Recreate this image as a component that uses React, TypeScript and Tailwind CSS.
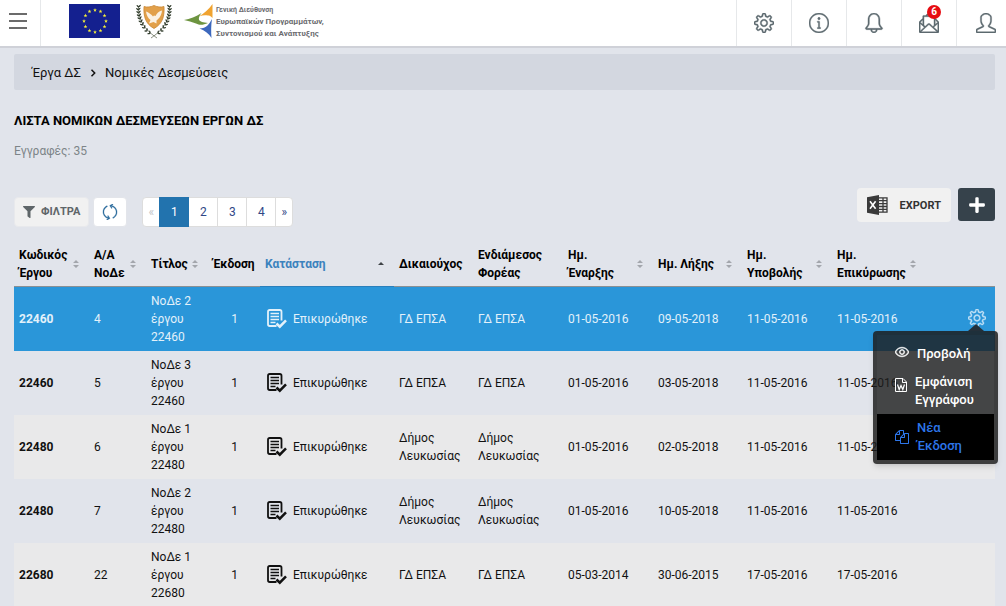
import React from "react";
import { SlBell, SlEnvolopeLetter, SlEye, SlInfo, SlRefresh, SlSettings, SlUser } from "react-icons/sl";
import { FaFilter, FaPlus } from "react-icons/fa";

type Row = {
  code: string;
  serial: string;
  title: string[];
  version: string;
  status: string;
  beneficiary: string;
  body: string;
  start: string;
  end: string;
  submitted: string;
  approved: string;
};

const rows: Row[] = [
  { code: "22460", serial: "4", title: ["ΝοΔε 2", "έργου", "22460"], version: "1", status: "Επικυρώθηκε", beneficiary: "ΓΔ ΕΠΣΑ", body: "ΓΔ ΕΠΣΑ", start: "01-05-2016", end: "09-05-2018", submitted: "11-05-2016", approved: "11-05-2016" },
  { code: "22460", serial: "5", title: ["ΝοΔε 3", "έργου", "22460"], version: "1", status: "Επικυρώθηκε", beneficiary: "ΓΔ ΕΠΣΑ", body: "ΓΔ ΕΠΣΑ", start: "01-05-2016", end: "03-05-2018", submitted: "11-05-2016", approved: "11-05-2016" },
  { code: "22480", serial: "6", title: ["ΝοΔε 1", "έργου", "22480"], version: "1", status: "Επικυρώθηκε", beneficiary: "Δήμος Λευκωσίας", body: "Δήμος Λευκωσίας", start: "01-05-2016", end: "02-05-2018", submitted: "11-05-2016", approved: "11-05-2016" },
  { code: "22480", serial: "7", title: ["ΝοΔε 2", "έργου", "22480"], version: "1", status: "Επικυρώθηκε", beneficiary: "Δήμος Λευκωσίας", body: "Δήμος Λευκωσίας", start: "01-05-2016", end: "10-05-2018", submitted: "11-05-2016", approved: "11-05-2016" },
  { code: "22680", serial: "22", title: ["ΝοΔε 1", "έργου", "22680"], version: "1", status: "Επικυρώθηκε", beneficiary: "ΓΔ ΕΠΣΑ", body: "ΓΔ ΕΠΣΑ", start: "05-03-2014", end: "30-06-2015", submitted: "17-05-2016", approved: "17-05-2016" },
];

type Column = { lines: string[]; sort: "none" | "both" | "asc"; width: string };

const columns: Column[] = [
  { lines: ["Κωδικός", "Έργου"], sort: "both", width: "w-[75px]" },
  { lines: ["Α/Α", "ΝοΔε"], sort: "both", width: "w-[57px]" },
  { lines: ["Τίτλος"], sort: "both", width: "w-[62px]" },
  { lines: ["Έκδοση"], sort: "none", width: "w-[52px]" },
  { lines: ["Κατάσταση"], sort: "asc", width: "w-[134px]" },
  { lines: ["Δικαιούχος"], sort: "none", width: "w-[79px]" },
  { lines: ["Ενδιάμεσος", "Φορέας"], sort: "none", width: "w-[90px]" },
  { lines: ["Ημ.", "Έναρξης"], sort: "both", width: "w-[90px]" },
  { lines: ["Ημ. Λήξης"], sort: "both", width: "w-[89px]" },
  { lines: ["Ημ.", "Υποβολής"], sort: "both", width: "w-[90px]" },
  { lines: ["Ημ.", "Επικύρωσης"], sort: "both", width: "w-[94px]" },
];

function EuFlag() {
  const stars = Array.from({ length: 12 }, (_, i) => {
    const a = (i * Math.PI) / 6;
    return { x: 26 + 11 * Math.sin(a), y: 17 - 11 * Math.cos(a) };
  });
  return (
    <svg className="h-[34px] w-[51px]" viewBox="0 0 51 34" aria-hidden="true">
      <rect width="51" height="34" fill="#14208f" />
      {stars.map((s, i) => (
        <path
          key={i}
          transform={`translate(${s.x} ${s.y})`}
          d="M0-2 .5-.6 1.9-.6 .8.3 1.2 1.7 0 .9-1.2 1.7-.8.3-1.9-.6-.5-.6Z"
          fill="#f4ee3a"
        />
      ))}
    </svg>
  );
}

function Laurel() {
  const leaves = [
    [1.6, 4, 0], [1.2, 7, 0], [1.5, 10, -4], [2, 13, -8], [2.8, 16, -14], [4, 19, -20], [5.500, 22, -28], [7.500, 25, -36], [10, 28, -44], [13, 30.500, -52],
  ];
  return (
    <g>
      <path d="M1.500 3C1 14 5 25 20 35" fill="none" stroke="#57604a" strokeWidth=".7" />
      {leaves.map(([x, y, r], i) => (
        <g key={i} transform={`translate(${x} ${y}) rotate(${r})`} fill="#2f3a2a">
          <ellipse cx="-1.1" cy="0" rx="1.600" ry=".7" transform="rotate(45)" />
          <ellipse cx="1.500" cy="0" rx="1.600" ry=".7" transform="rotate(-45)" />
        </g>
      ))}
    </g>
  );
}

function Emblem() {
  return (
    <svg className="h-9 w-[34px] overflow-visible" viewBox="0 0 34 36" aria-hidden="true">
      <Laurel />
      <g transform="translate(34 0) scale(-1 1)">
        <Laurel />
      </g>
      <path d="M7 3.500C10 4.500 14 4 17 2.500 20 4 24 4.500 27 3.500 27.500 13 26 20.500 17 25.500 8 20.500 6.500 13 7 3.500Z" fill="#e2a04a" stroke="#c98531" strokeWidth=".8" />
      <path d="M9 8.500C11.500 9.500 14 11 16 13.500L17 12.500 18.500 13C19.500 10.500 22 8 25 7.500 24.500 13 22 15.500 19.500 17.500L19.500 20.500 16.500 19 12 20.500 13.500 17C11 15 9.500 12.500 9 8.500Z" fill="#fbf1e2" />
    </svg>
  );
}

function Arrows() {
  return (
    <svg className="h-9 w-[31px]" viewBox="0 0 31 36" aria-hidden="true">
      <path d="M29.500 1 29.500 15C27.500 13 26.500 12.500 25 12.500 22 12 19 12.200 16 13.500 21 10.500 26 6 29.500 1Z" fill="#f0a330" />
      <path d="M1 17C7 16 13 13.500 18.500 10 16.500 12.500 15.500 14.500 16 17 17 18.500 20 19.500 25 20 20 22 17 22.500 13 20.500 9 19 5 18 1 17Z" fill="#6d9440" />
      <path d="M28.500 35C26 31 22 27.500 16.500 25.500 20 25.500 22.500 24.500 24.500 22.500 26.500 20.500 27.500 18.500 29 16 28 22 28 29 28.500 35Z" fill="#3d68bd" />
    </svg>
  );
}

function StatusIcon() {
  return (
    <svg className="h-5 w-5 shrink-0" viewBox="0 0 20 20" fill="none" stroke="currentColor" aria-hidden="true">
      <path d="M14.500 11.500V2.800Q14.500 1 12.800 1H2.700Q1 1 1 2.700V15.300Q1 17 2.700 17H9.500" strokeWidth="1.800" />
      <path d="M3.500 4.500H12M3.500 7.500H12M3.500 10.500H12M3.500 13.500H8.500" strokeWidth="1.500" />
      <path d="M9.500 14.500 12.800 17.700 19 11.300" strokeWidth="2.500" />
    </svg>
  );
}

function ExcelIcon() {
  return (
    <svg className="h-5 w-[21px]" viewBox="0 0 21 20" aria-hidden="true">
      <path d="M0 2.300 12 0V20L0 17.700Z" fill="#3a3a3a" />
      <path d="M3 6.300 8.600 13.700M8.600 6.300 3 13.700" stroke="#fff" strokeWidth="1.600" />
      <path d="M12 2.800H20V17.200H12M12 5.700H20M12 8.600H20M12 11.500H20M12 14.400H20M16 2.800V17.200" fill="none" stroke="#3a3a3a" strokeWidth="1.300" />
    </svg>
  );
}

function DocumentIcon() {
  return (
    <svg className="mb-3 h-[14px] w-3 shrink-0" viewBox="0 0 12 14" fill="none" stroke="currentColor" aria-hidden="true">
      <path d="M.5.500H8L11.500 4V13.500H.5ZM7.500.500V4.500H11.500" />
      <path d="M2.500 6.500 4.200 11.500 6 7.500 7.800 11.500 9.500 6.500" strokeWidth="1.200" />
    </svg>
  );
}

function CopyIcon() {
  return (
    <svg className="h-[14px] w-[14px]" viewBox="0 0 1792 1792" fill="currentColor" aria-hidden="true">
      <path d="M1696 384q40 0 68 28t28 68v1216q0 40-28 68t-68 28h-960q-40 0-68-28t-28-68v-288h-544q-40 0-68-28t-28-68v-672q0-40 20-88t48-76l408-408q28-28 76-48t88-20h416q40 0 68 28t28 68v328q68-40 128-40h416zm-544 213l-299 299h299v-299zm-640-384l-299 299h299v-299zm196 647l316-316v-416h-384v416q0 40-28 68t-68 28h-416v640h512v-256q0-40 20-88t48-76zm956 804v-1152h-384v416q0 40-28 68t-68 28h-416v640h896z" />
    </svg>
  );
}

function SortIcon({ kind }: { kind: "both" | "asc" }) {
  return (
    <svg className="h-2 w-[6px] shrink-0" viewBox="0 0 6 8" aria-hidden="true">
      {kind === "both" ? (
        <path d="M3 0 6 3H0ZM0 5H6L3 8Z" fill="#a3a6ac" />
      ) : (
        <path d="M3 2 6 5H0Z" fill="#3f4347" />
      )}
    </svg>
  );
}

const navCell = "relative flex w-[55px] items-center justify-center border-l border-[#e6e8ea] text-xl text-[#5d6a70]";

function Header() {
  return (
    <header className="flex h-12 items-stretch border-b-2 border-[#cfd1d8] bg-white">
      <button aria-label="Μενού" className="flex w-[41px] flex-col justify-center gap-[5px] border-r border-[#e6e8ea] pr-1 pb-1 pl-[9px]">
        <span className="h-0.5 w-[18px] bg-[#6b6b6b]" />
        <span className="h-0.5 w-[18px] bg-[#6b6b6b]" />
        <span className="h-0.5 w-[18px] bg-[#6b6b6b]" />
      </button>
      <div className="flex items-start pt-[3px] pl-7">
        <div className="flex pt-px">
          <EuFlag />
        </div>
        <div className="flex pl-[17px]">
          <Emblem />
        </div>
        <div className="flex pl-3">
          <Arrows />
        </div>
        <div className="pt-px pl-0.5 text-[8px] leading-3 font-bold whitespace-nowrap text-[#6c6c70]">
          <p className="text-[7px]">Γενική Διεύθυνση</p>
          <p>Ευρωπαϊκών Προγραμμάτων,</p>
          <p>Συντονισμού και Ανάπτυξης</p>
        </div>
      </div>
      <nav className="ml-auto flex [&_svg]:[stroke-width:20]">
        <button aria-label="Ρυθμίσεις" className={navCell}><SlSettings /></button>
        <button aria-label="Πληροφορίες" className={navCell}><SlInfo /></button>
        <button aria-label="Ειδοποιήσεις" className={navCell}><SlBell /></button>
        <button aria-label="Μηνύματα" className={navCell}>
          <SlEnvolopeLetter />
          <span className="absolute top-[5px] right-[15px] flex h-[14px] w-[14px] items-center justify-center rounded-full bg-[#e60c12] text-[10px] font-bold text-white">6</span>
        </button>
        <button aria-label="Χρήστης" className="flex w-[50px] items-center border-l border-[#e6e8ea] pl-[19px] text-xl text-[#5d6a70]"><SlUser /></button>
      </nav>
    </header>
  );
}

function Pagination() {
  const cell = "flex w-[29px] items-center justify-center border-r border-[#dddddd] text-[#2f4787]";
  return (
    <nav aria-label="Σελίδες" className="ml-[15px] flex h-[30px] rounded-sm border border-[#dddddd] bg-white text-xs">
      <a href="#prev" className="flex w-4 items-center justify-center text-[#c4c6ca]">«</a>
      <a href="#1" aria-current="page" className="-my-px flex w-[30px] items-center justify-center bg-[#2273ae] text-white">1</a>
      <a href="#2" className={cell}>2</a>
      <a href="#3" className={cell}>3</a>
      <a href="#4" className={cell}>4</a>
      <a href="#next" className="flex w-4 items-center justify-center text-[#2f4787]">»</a>
    </nav>
  );
}

function Toolbar() {
  return (
    <div className="mt-7 flex items-start">
      <button className="mt-[9px] flex h-[30px] items-center gap-[6px] rounded-sm border border-[#e8e9ec] bg-[#f1f1f1] px-2 text-[11px] font-bold text-[#5f6669]">
        <FaFilter className="h-3 w-3" />
        ΦΙΛΤΡΑ
      </button>
      <button aria-label="Ανανέωση" className="mt-[9px] ml-1 flex h-[30px] w-[34px] items-center justify-center rounded-sm border border-[#e3e5ea] bg-white text-base text-[#2a6a9c] [&_svg]:[stroke-width:20]">
        <SlRefresh />
      </button>
      <div className="pt-[9px]">
        <Pagination />
      </div>
      <button className="ml-auto flex h-[34px] items-center gap-3 rounded-sm bg-[#f1f1f1] px-[10px] text-[11px] font-bold text-[#333333]">
        <ExcelIcon />
        <span className="pt-0.5">EXPORT</span>
      </button>
      <button aria-label="Προσθήκη" className="ml-[7px] flex h-[33px] w-[37px] items-center justify-center rounded-[3px] bg-[#36424b] text-lg text-white">
        <FaPlus />
      </button>
    </div>
  );
}

function RowMenu() {
  return (
    <div className="absolute top-[22px] -right-3 z-10 w-[125px]">
      <div className="absolute -top-[7px] right-[14px] h-0 w-0 border-x-8 border-b-[7px] border-x-transparent border-b-[#24303a]" />
      <ul className="rounded-[4px] border-4 border-[#1d1d1d]/20 bg-[#1d1d1d]/80 pt-[5px] text-[13px] leading-[18px] font-medium text-white shadow-md">
        <li>
          <a href="#view" className="flex items-center gap-2 py-[5px] pl-[18px]">
            <SlEye className="mb-1 h-[14px] w-[14px] [stroke-width:40]" />
            Προβολή
          </a>
        </li>
        <li>
          <a href="#document" className="flex items-center gap-2 py-[5px] pl-[18px]">
            <DocumentIcon />
            <span>Εμφάνιση<br />Εγγράφου</span>
          </a>
        </li>
        <li>
          <a href="#version" className="flex items-center gap-2 bg-black py-[5px] pl-[18px] text-[#2d76ea]">
            <CopyIcon />
            <span>Νέα<br />Έκδοση</span>
          </a>
        </li>
      </ul>
    </div>
  );
}

function CommitmentsTable() {
  return (
    <table className="mt-[14px] w-full table-fixed border-separate border-spacing-0 text-left text-xs leading-[18px]">
      <thead>
        <tr>
          {columns.map((c) => (
            <th
              key={c.lines.join(" ")}
              className={`${c.width} h-[46px] border-b py-0 pr-0 pl-[5px] align-middle font-bold ${c.sort === "asc" ? "border-[#2a7fbb] text-[#3b82bd]" : "border-[#8a9094] text-black"}`}
            >
              <div className="flex items-center justify-between pr-[10px] whitespace-nowrap">
                <span>
                  {c.lines.map((l) => (
                    <span key={l} className="block">{l}</span>
                  ))}
                </span>
                {c.sort !== "none" && <SortIcon kind={c.sort} />}
              </div>
            </th>
          ))}
          <th className="border-b border-[#8a9094]" aria-label="Ενέργειες" />
        </tr>
      </thead>
      <tbody>
        {rows.map((r, i) => {
          const selected = i === 0;
          const tone = selected ? "bg-[#2a96d9] text-[#e3f1fa]" : i % 2 === 0 ? "bg-[#e9e9ea] text-[#111111]" : "text-[#111111]";
          return (
            <tr key={i} className={`${tone} [&>td]:h-16 [&>td]:pr-1 [&>td]:pl-[5px] [&>td]:align-middle`}>
              <td className="font-bold">{r.code}</td>
              <td>{r.serial}</td>
              <td>
                {r.title.map((t) => (
                  <span key={t} className="block">{t}</span>
                ))}
              </td>
              <td className="text-center">{r.version}</td>
              <td>
                <div className="flex items-center gap-[6px] pl-0.5">
                  <StatusIcon />
                  {r.status}
                </div>
              </td>
              <td>{r.beneficiary}</td>
              <td>{r.body}</td>
              <td>{r.start}</td>
              <td>{r.end}</td>
              <td>{r.submitted}</td>
              <td>{r.approved}</td>
              <td>
                {selected && (
                  <div className="relative ml-auto mr-[5px] h-5 w-[18px]">
                    <button aria-label="Ενέργειες γραμμής" className="block text-lg text-[#bfe0f5] [&_svg]:[stroke-width:20]"><SlSettings /></button>
                    <RowMenu />
                  </div>
                )}
              </td>
            </tr>
          );
        })}
      </tbody>
    </table>
  );
}

export default function App() {
  return (
    <div className="min-h-screen overflow-x-hidden bg-[#e1e4eb] text-[13px] leading-[18px] text-black [font-family:Roboto,sans-serif]">
      <Header />
      <main className="pt-[6px] pr-[11px] pl-[14px]">
        <nav aria-label="Διαδρομή" className="flex h-9 items-center gap-[9px] rounded-xs bg-[#d3d7e0] pt-0.5 pl-[18px] text-[#111111]">
          <a href="#projects">Έργα ΔΣ</a>
          <svg className="h-2 w-[6px]" viewBox="0 0 6 8" fill="none" stroke="currentColor" strokeWidth="1.500" aria-hidden="true">
            <path d="M1.500 .8 4.700 4 1.500 7.200" />
          </svg>
          <span>Νομικές Δεσμεύσεις</span>
        </nav>
        <h1 className="mt-[22px] font-bold">ΛΙΣΤΑ ΝΟΜΙΚΩΝ ΔΕΣΜΕΥΣΕΩΝ ΕΡΓΩΝ ΔΣ</h1>
        <p className="mt-3 text-xs leading-[18px] text-[#7d8488]">Εγγραφές: 35</p>
        <Toolbar />
        <CommitmentsTable />
      </main>
    </div>
  );
}
